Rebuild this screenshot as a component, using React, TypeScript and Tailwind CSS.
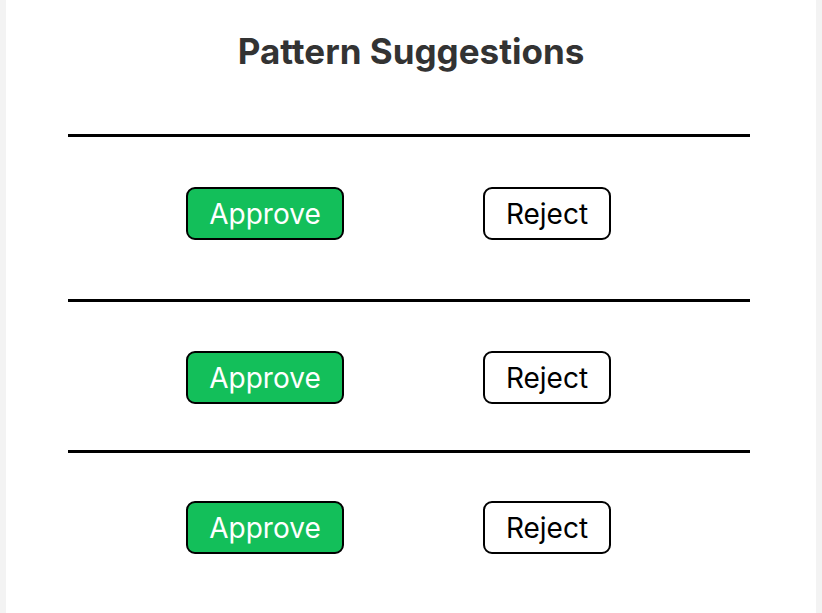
const ROWS = [
  { top: "pt-[50px]", bottom: "pb-[59px]" },
  { top: "pt-[49px]", bottom: "pb-[46px]" },
  { top: "pt-[48px]", bottom: "pb-[40px]" },
];

export default function App() {
  return (
    <div className="h-[613px] overflow-hidden bg-[#f3f3f3] px-[6px] font-['Inter',sans-serif]">
      <div className="h-full bg-white">
        <h1 className="pt-[29px] text-center text-[35px] font-bold leading-[44px] text-[#333333]">
          Pattern Suggestions
        </h1>

        <div className="mt-[61px] ml-[62px] w-[682px]">
          {ROWS.map((r, i) => (
            <div key={i} className={`border-t-[3px] border-black ${r.top} ${r.bottom}`}>
              <div className="flex pl-[118px] gap-[139px]">
                <button className="h-[53px] w-[158px] rounded-[9px] border-2 border-black bg-[#13bf5a] text-[28px] text-white">
                  Approve
                </button>
                <button className="h-[53px] w-[128px] rounded-[9px] border-2 border-black bg-white text-[28px] text-black">
                  Reject
                </button>
              </div>
            </div>
          ))}
        </div>
      </div>
    </div>
  );
}
